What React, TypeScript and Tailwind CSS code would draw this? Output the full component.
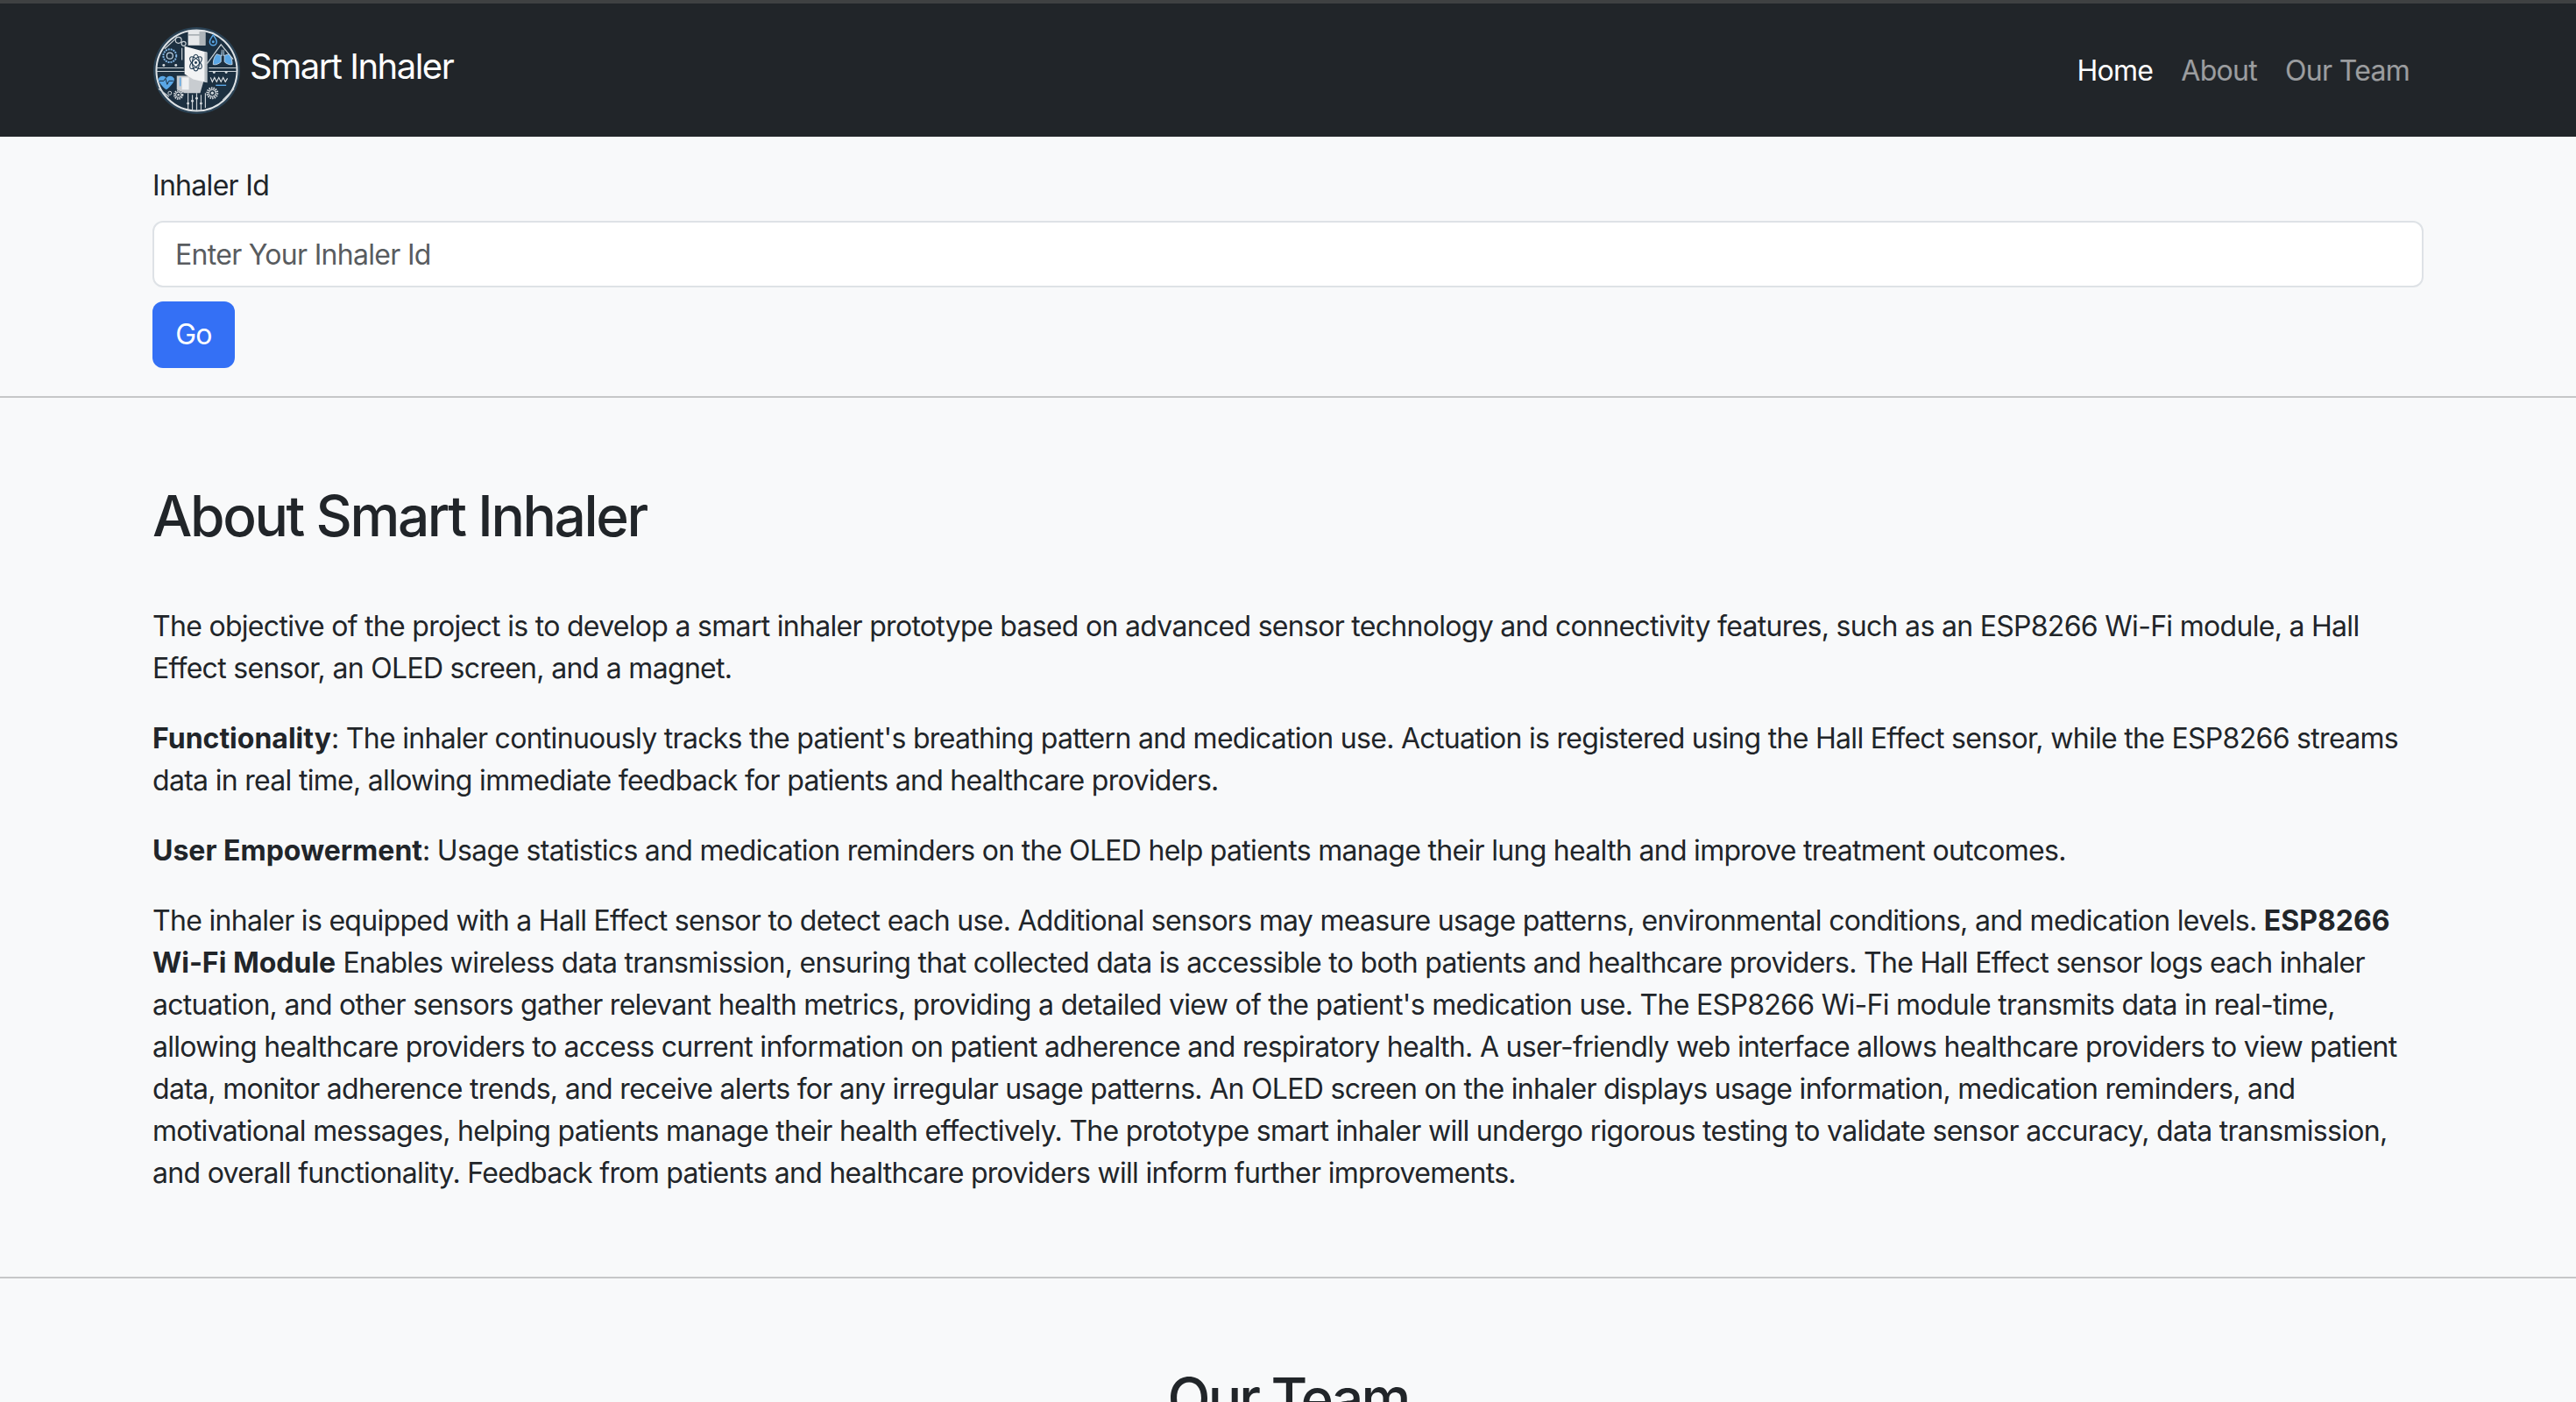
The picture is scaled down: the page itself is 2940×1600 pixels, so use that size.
export default function App() {
  const f = { fontFamily: 'Inter, "Liberation Sans", sans-serif' };
  const b = "font-bold tracking-[0px]";
  return (
    <div style={f} className="h-[1600px] overflow-hidden bg-[#f8f9fa] text-[32px] leading-[48px] tracking-[-0.7px] text-[#212529]">
      <nav className="h-[156px] border-t-4 border-[#3f4142] bg-[#212529]">
        <div className="flex h-[152px] items-center justify-between pl-[175px] pr-[174px]">
          <div className="flex items-center gap-[11px]">
            <Logo />
            <span className="pb-[8px] text-[40px] leading-[60px] tracking-[-1.5px] text-white">Smart Inhaler</span>
          </div>
          <div className="flex gap-[32px] pr-[16px] pt-[2px]">
            <span className="text-white">Home</span>
            <span className="text-white/55">About</span>
            <span className="text-white/55">Our Team</span>
          </div>
        </div>
      </nav>
      <section className="px-[174px] pt-[32px]">
        <label className="mb-[16px] block leading-[48px]">Inhaler Id</label>
        <input
          readOnly
          placeholder="Enter Your Inhaler Id"
          className="block h-[76px] w-full rounded-[12px] border-2 border-[#dee2e6] bg-white px-[24px] text-[32px] tracking-[-0.7px] outline-none placeholder:text-[#595c5f]"
        />
        <button className="mt-[16px] block h-[76px] w-[94px] rounded-[12px] bg-[#3470f5] text-[32px] text-white">Go</button>
      </section>
      <hr className="mt-[32px] border-t-2 border-[#c6c7c8]" />
      <section className="px-[174px] pt-[96px]">
        <h1 className="text-[64px] font-medium leading-[77px] tracking-[-2.4px]">About Smart Inhaler</h1>
        <div className="mt-[64px] flex flex-col gap-[32px]">
          <p>The objective of the project is to develop a smart inhaler prototype based on advanced sensor technology and connectivity features, such as an ESP8266 Wi-Fi module, a Hall Effect sensor, an OLED screen, and a magnet.</p>
          <p><strong className={b}>Functionality</strong>: The inhaler continuously tracks the patient's breathing pattern and medication use. Actuation is registered using the Hall Effect sensor, while the ESP8266 streams data in real time, allowing immediate feedback for patients and healthcare providers.</p>
          <p><strong className={b}>User Empowerment</strong>: Usage statistics and medication reminders on the OLED help patients manage their lung health and improve treatment outcomes.</p>
          <p>The inhaler is equipped with a Hall Effect sensor to detect each use. Additional sensors may measure usage patterns, environmental conditions, and medication levels. <strong className={b}>ESP8266 Wi-Fi Module</strong> Enables wireless data transmission, ensuring that collected data is accessible to both patients and healthcare providers. The Hall Effect sensor logs each inhaler actuation, and other sensors gather relevant health metrics, providing a detailed view of the patient's medication use. The ESP8266 Wi-Fi module transmits data in real-time, allowing healthcare providers to access current information on patient adherence and respiratory health. A user-friendly web interface allows healthcare providers to view patient data, monitor adherence trends, and receive alerts for any irregular usage patterns. An OLED screen on the inhaler displays usage information, medication reminders, and motivational messages, helping patients manage their health effectively. The prototype smart inhaler will undergo rigorous testing to validate sensor accuracy, data transmission, and overall functionality. Feedback from patients and healthcare providers will inform further improvements.</p>
        </div>
      </section>
      <hr className="mt-[94px] border-t-2 border-[#c6c7c8]" />
      <h2 className="pt-[98px] text-center text-[64px] font-medium leading-[77px] tracking-[-2.8px]">Our Team</h2>
    </div>
  );
}

function Gear({ x, y, r }: { x: number; y: number; r: number }) {
  return (
    <g>
      <circle cx={x} cy={y} r={r} stroke="#d5dade" strokeWidth={r * 0.55} strokeDasharray="1.4 1" fill="none" />
      <circle cx={x} cy={y} r={r * 0.7} stroke="#d5dade" strokeWidth="1" fill="#1c3041" />
      <circle cx={x} cy={y} r={r * 0.3} fill="#d5dade" />
    </g>
  );
}

function Logo() {
  return (
    <svg viewBox="0 0 100 100" className="h-[99px] w-[99px] shrink-0">
      <circle cx="50" cy="50" r="50" fill="#2b4254" />
      <circle cx="50" cy="50" r="46.500" fill="#1c3041" stroke="#dfe3e6" strokeWidth="2" />
      <g stroke="#c9d0d5" strokeWidth="1.200" fill="none">
        <path d="M4 47H35M64 47H96M4 51H36M64 51H96" />
        <path d="M13 25L27 12M33 24L33 38M62 42L78 20L92 37M6 71L18 80M93 71L80 84" />
        <path d="M40 76V95M45 78V96M50 76V96M55 78V96M60 76V93" />
        <circle cx="29" cy="15" r="3.500" /><circle cx="35" cy="19" r="2.500" />
      </g>
      <g fill="#d5dade">
        <circle cx="12" cy="44" r="1.500" /><circle cx="26" cy="44" r="1.500" /><circle cx="70" cy="52" r="1.500" /><circle cx="84" cy="52" r="1.500" />
        <circle cx="45" cy="85" r="1.500" /><circle cx="50" cy="82" r="1.500" /><circle cx="55" cy="88" r="1.500" /><circle cx="40" cy="88" r="1.500" />
      </g>
      <circle cx="19" cy="33" r="7.500" stroke="#7fb2e0" strokeWidth="2" strokeDasharray="2 1" fill="none" />
      <circle cx="19" cy="33" r="3.500" stroke="#c5d6e4" strokeWidth="1.200" fill="none" />
      <Gear x={29} y={78} r={4.500} />
      <Gear x={68} y={76} r={5.500} />
      <circle cx="19" cy="76" r="2" stroke="#d5dade" strokeWidth="1" fill="none" />
      <path d="M40 4H60V21H40Z" fill="#e6e8ea" />
      <path d="M40 9H60" stroke="#8f979d" strokeWidth="1.200" />
      <path d="M53 5H60V21H53Z" fill="#aeb5ba" />
      <path d="M27 56H42L58 62L54 76H36L27 72Z" fill="#c8ccd0" />
      <path d="M33 58H41V72H33Z" fill="#eef0f2" />
      <path d="M36 22L62 29V64L46 60L36 54Z" fill="#f2f3f4" />
      <path d="M59 28L62 29V64L59 63Z" fill="#b9bfc4" />
      <g stroke="#1f3a50" strokeWidth="1.100" fill="none">
        <ellipse cx="49" cy="41" rx="9" ry="4" transform="rotate(45 49 41)" />
        <ellipse cx="49" cy="41" rx="9" ry="4" transform="rotate(-45 49 41)" />
        <ellipse cx="49" cy="41" rx="4" ry="9.500" />
      </g>
      <circle cx="49" cy="41" r="1.500" fill="#1f3a50" />
      <path d="M79 26V33L73 31C70 34 69 38 69 43C72 44 76 42 78 40V33M81 26V33L87 31C90 34 91 38 91 43C88 44 84 42 82 40V33" fill="#5aa7e6" stroke="#d5e3ee" strokeWidth=".8" />
      <path d="M69 9C71 12 73 14 73 17A4 4 0 0 1 65 17C65 14 67 12 69 9Z" fill="#1c3041" stroke="#5aa7e6" strokeWidth="1.500" />
      <circle cx="69" cy="17" r="1.500" fill="#5aa7e6" />
      <path d="M6 59C9 55 14 56 15 59C16 56 21 55 24 59C25 63 19 69 15 72C11 69 5 63 6 59Z" fill="#5aa7e6" />
      <path d="M7 62H12L14 59L16 66L18 62H23" stroke="#1c3041" strokeWidth="1" fill="none" />
      <path d="M31 58V68" stroke="#5aa7e6" strokeWidth="1.500" />
      <path d="M66 58l2 5 2.500-5 2.500 5 2.500-5 2.500 5 2.500-5 2.500 5 2.500-4" stroke="#e4e8eb" strokeWidth="1.100" fill="none" />
      <path d="M72 67H84" stroke="#5aa7e6" strokeWidth="1.400" />
    </svg>
  );
}
